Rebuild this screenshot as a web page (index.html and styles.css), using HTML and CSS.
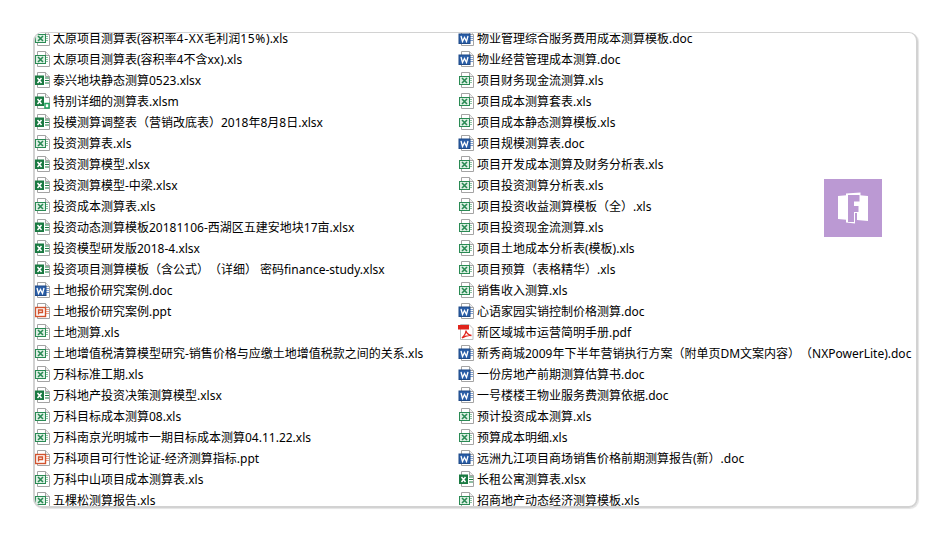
FILE: index.html
```html
<!DOCTYPE html>
<html lang="zh-CN">
<head>
<meta charset="utf-8">
<title>测算表</title>
<link rel="stylesheet" href="styles.css">
</head>
<body>
<svg class="defs" width="0" height="0" aria-hidden="true">
  <symbol id="page" viewBox="0 0 16 16">
    <path d="M3.500 .5H11.500L15.500 4.500V15.500H3.500Z" fill="#fff" stroke="#a4a4a4"/>
    <path d="M11.500 .5V4.500H15.500" fill="#eee" stroke="#a4a4a4"/>
  </symbol>
  <symbol id="xls" viewBox="0 0 16 16">
    <use href="#page"/>
    <path d="M11 6.500H14M11 8.500H14M11 10.500H14" stroke="#8cc3a3"/>
    <rect x="1.500" y="4.500" width="10" height="8" fill="#dcefe3" stroke="#2a8a54"/>
    <path d="M4 6L9 11M9 6L4 11" stroke="#2a8a54" stroke-width="1.600"/>
  </symbol>
  <symbol id="xlsx" viewBox="0 0 16 16">
    <use href="#page"/>
    <path d="M11 6H15M11 8.500H15M11 11H15" stroke="#1e7c45"/>
    <rect x="1" y="3.500" width="9" height="9.500" fill="#1a7a42"/>
    <path d="M3.500 6L7.500 11M7.500 6L3.500 11" stroke="#fff" stroke-width="1.500"/>
  </symbol>
  <symbol id="xlsm" viewBox="0 0 16 16">
    <use href="#page"/>
    <rect x="1" y="3.500" width="9" height="9.500" fill="#1a7a42"/>
    <path d="M3.500 6L7.500 11M7.500 6L3.500 11" stroke="#fff" stroke-width="1.500"/>
    <rect x="11" y="10.500" width="4" height="4.500" fill="#fff" stroke="#22a35f" stroke-width="1.500"/>
  </symbol>
  <symbol id="doc" viewBox="0 0 16 16">
    <use href="#page"/>
    <path d="M12 6.500H15M12 8.500H15M12 10.500H15" stroke="#7f9fd0"/>
    <rect x="1" y="4" width="11" height="9.500" fill="#2b5fa8" stroke="#1f4a87"/>
    <path d="M3 6L4.500 11.500L6.500 7.500L8.500 11.500L10 6" fill="none" stroke="#fff" stroke-width="1.300"/>
  </symbol>
  <symbol id="ppt" viewBox="0 0 16 16">
    <use href="#page"/>
    <path d="M12 6.500H15M12 8.500H15M12 10.500H15" stroke="#eea58c"/>
    <rect x="1.500" y="4.500" width="10" height="9" fill="#fff" stroke="#d2532d" stroke-width="1.400"/>
    <path d="M4.500 11.500V7H8.500V9.500H4.500" fill="none" stroke="#d2532d" stroke-width="1.400"/>
  </symbol>
  <symbol id="pdf" viewBox="0 0 16 16">
    <path d="M2.500 .5H11L15 4.500V15.500H2.500Z" fill="#fff" stroke="#bdbdbd"/>
    <rect x="0" y="1" width="11" height="4.500" fill="#e0241c"/>
    <path d="M4 14C6.500 11.500 8 8.500 8 6.500C8 8.500 10 11 13.500 11.500C10.500 11 7 12 4 14Z" fill="none" stroke="#e0241c" stroke-width="1.300"/>
  </symbol>
</svg>
<main class="frame">
  <div class="grid">
    <ul class="col">
      <li class="row"><svg class="ico"><use href="#xls"/></svg><span>太原项目测算表(容积率<span class="wide">4-XX</span>毛利润<span class="wide">15%</span>).xls</span></li>
      <li class="row"><svg class="ico"><use href="#xls"/></svg>太原项目测算表(容积率4不含xx).xls</li>
      <li class="row"><svg class="ico"><use href="#xlsx"/></svg>泰兴地块静态测算0523.xlsx</li>
      <li class="row"><svg class="ico"><use href="#xlsm"/></svg>特别详细的测算表.xlsm</li>
      <li class="row"><svg class="ico"><use href="#xlsx"/></svg>投模测算调整表（营销改底表）2018年8月8日.xlsx</li>
      <li class="row"><svg class="ico"><use href="#xls"/></svg>投资测算表.xls</li>
      <li class="row"><svg class="ico"><use href="#xlsx"/></svg>投资测算模型.xlsx</li>
      <li class="row"><svg class="ico"><use href="#xlsx"/></svg>投资测算模型-中梁.xlsx</li>
      <li class="row"><svg class="ico"><use href="#xls"/></svg>投资成本测算表.xls</li>
      <li class="row"><svg class="ico"><use href="#xlsx"/></svg>投资动态测算模板20181106-西湖区五建安地块17亩.xlsx</li>
      <li class="row"><svg class="ico"><use href="#xlsx"/></svg>投资模型研发版2018-4.xlsx</li>
      <li class="row"><svg class="ico"><use href="#xlsx"/></svg>投资项目测算模板（含公式）（详细） 密码finance-study.xlsx</li>
      <li class="row"><svg class="ico"><use href="#doc"/></svg>土地报价研究案例.doc</li>
      <li class="row"><svg class="ico"><use href="#ppt"/></svg>土地报价研究案例.ppt</li>
      <li class="row"><svg class="ico"><use href="#xls"/></svg>土地测算.xls</li>
      <li class="row"><svg class="ico"><use href="#xls"/></svg>土地增值税清算模型研究-销售价格与应缴土地增值税款之间的关系.xls</li>
      <li class="row"><svg class="ico"><use href="#xls"/></svg>万科标准工期.xls</li>
      <li class="row"><svg class="ico"><use href="#xlsx"/></svg>万科地产投资决策测算模型.xlsx</li>
      <li class="row"><svg class="ico"><use href="#xls"/></svg>万科目标成本测算08.xls</li>
      <li class="row"><svg class="ico"><use href="#xls"/></svg>万科南京光明城市一期目标成本测算04.11.22.xls</li>
      <li class="row"><svg class="ico"><use href="#ppt"/></svg>万科项目可行性论证-经济测算指标.ppt</li>
      <li class="row"><svg class="ico"><use href="#xls"/></svg>万科中山项目成本测算表.xls</li>
      <li class="row"><svg class="ico"><use href="#xls"/></svg>五棵松测算报告.xls</li>
    </ul>
    <ul class="col">
      <li class="row"><svg class="ico"><use href="#doc"/></svg>物业管理综合服务费用成本测算模板.doc</li>
      <li class="row"><svg class="ico"><use href="#doc"/></svg>物业经营管理成本测算.doc</li>
      <li class="row"><svg class="ico"><use href="#xls"/></svg>项目财务现金流测算.xls</li>
      <li class="row"><svg class="ico"><use href="#xls"/></svg>项目成本测算套表.xls</li>
      <li class="row"><svg class="ico"><use href="#xls"/></svg>项目成本静态测算模板.xls</li>
      <li class="row"><svg class="ico"><use href="#doc"/></svg>项目规模测算表.doc</li>
      <li class="row"><svg class="ico"><use href="#xls"/></svg>项目开发成本测算及财务分析表.xls</li>
      <li class="row"><svg class="ico"><use href="#xls"/></svg>项目投资测算分析表.xls</li>
      <li class="row"><svg class="ico"><use href="#xls"/></svg>项目投资收益测算模板（全）.xls</li>
      <li class="row"><svg class="ico"><use href="#xls"/></svg>项目投资现金流测算.xls</li>
      <li class="row"><svg class="ico"><use href="#xls"/></svg>项目土地成本分析表(模板).xls</li>
      <li class="row"><svg class="ico"><use href="#xls"/></svg>项目预算（表格精华）.xls</li>
      <li class="row"><svg class="ico"><use href="#xls"/></svg>销售收入测算.xls</li>
      <li class="row"><svg class="ico"><use href="#doc"/></svg>心语家园实销控制价格测算.doc</li>
      <li class="row"><svg class="ico"><use href="#pdf"/></svg>新区域城市运营简明手册.pdf</li>
      <li class="row"><svg class="ico"><use href="#doc"/></svg>新秀商城2009年下半年营销执行方案（附单页DM文案内容）（NXPowerLite).doc</li>
      <li class="row"><svg class="ico"><use href="#doc"/></svg>一份房地产前期测算估算书.doc</li>
      <li class="row"><svg class="ico"><use href="#doc"/></svg>一号楼楼王物业服务费测算依据.doc</li>
      <li class="row"><svg class="ico"><use href="#xls"/></svg>预计投资成本测算.xls</li>
      <li class="row"><svg class="ico"><use href="#xls"/></svg>预算成本明细.xls</li>
      <li class="row"><svg class="ico"><use href="#doc"/></svg>远洲九江项目商场销售价格前期测算报告(新）.doc</li>
      <li class="row"><svg class="ico"><use href="#xlsx"/></svg>长租公寓测算表.xlsx</li>
      <li class="row"><svg class="ico"><use href="#xls"/></svg>招商地产动态经济测算模板.xls</li>
    </ul>
  </div>
  <div class="badge">
    <svg class="logo" viewBox="0 0 58 58" aria-hidden="true">
      <path d="M14 17L25 16V41L14 40Z M33 16L44 17V42L33 41Z" fill="#fff"/>
      <path d="M22 14.500L36.500 13.500V34H31V44.500L22 43.500Z" fill="#fff"/>
      <path d="M24 16H35.500V22.500H30V27H34.500V33H30V43H24Z" fill="#bb99d3"/>
    </svg>
  </div>
</main>
</body>
</html>
```
FILE: styles.css
```css
html, body {
  margin: 0;
  padding: 0;
  background: #fff;
}

body {
  width: 950px;
  height: 540px;
  padding: 32px 0 0 33px;
  box-sizing: border-box;
  overflow: hidden;
  font-family: "Noto Sans", "Noto Sans CJK SC", sans-serif;
  font-size: 12px;
  color: #000;
  text-spacing-trim: space-all;
}

.defs {
  position: absolute;
}

.frame {
  position: relative;
  width: 885px;
  height: 476px;
  box-sizing: border-box;
  border-style: solid;
  border-color: #d2d2d2;
  border-width: 1px 2px 2px;
  border-radius: 9px;
  box-shadow: 1px 1px 1px #e4e4e4;
  overflow: hidden;
}

.grid {
  display: grid;
  grid-template-columns: 424px 1fr;
  margin: -6px 0 0 -1px;
}

.col {
  list-style: none;
  margin: 0;
  padding: 0;
}

.row {
  display: flex;
  align-items: center;
  gap: 3px;
  height: 21px;
  white-space: nowrap;
}

.wide {
  letter-spacing: 0.7px;
}

.ico {
  flex: none;
  width: 16px;
  height: 16px;
}

.badge {
  position: absolute;
  left: 789px;
  top: 146px;
  width: 58px;
  height: 58px;
  background: #bb99d3;
}

.logo {
  display: block;
  width: 58px;
  height: 58px;
}
```
